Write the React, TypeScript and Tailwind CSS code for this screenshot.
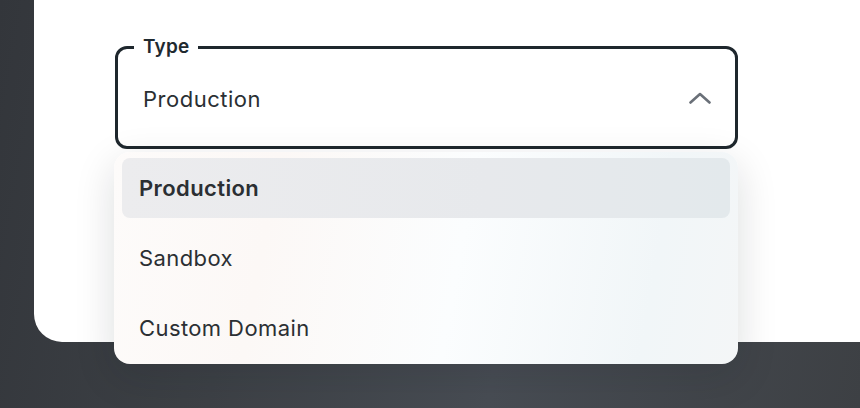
import React from "react";

export default function App() {
  return (
    <div className="w-[860px] h-[408px] overflow-hidden pl-[34px] bg-[linear-gradient(100deg,#33363b_0%,#3d4146_30%,#484d54_60%,#3d4044_100%)] font-['Inter','Noto_Sans',sans-serif]">
      <div className="relative h-[342px] bg-white rounded-bl-[28px] pt-[46px] pl-[81px] pr-[122px]">
        <div className="relative h-[103px] border-[3px] border-[#1e272d] rounded-[12px] bg-white flex items-center pl-[25px] pr-[24px] pt-[3px]">
          <span className="absolute -top-[13px] left-[16px] bg-white px-[9px] text-[19px] font-semibold leading-[22px] tracking-[0.2px] text-[#1f2a30]">
            Type
          </span>
          <span className="flex-1 text-[22px] leading-[28px] tracking-[0.5px] text-[#2a2f33]">Production</span>
          <svg width="22" height="12" viewBox="0 0 22 12" fill="none" className="mb-[3px]">
            <path d="M1.5 10.5 L11 2 L20.5 10.5" stroke="#6a7078" strokeWidth="2.6" strokeLinecap="round" strokeLinejoin="round" />
          </svg>
        </div>

        <div className="absolute left-[80px] top-[152px] w-[624px] h-[212px] rounded-[16px] bg-[linear-gradient(100deg,#fdfbfa_0%,#fcf8f6_25%,#fbfdfe_55%,#f1f6f8_85%,#f4f6f7_100%)] shadow-[0_12px_40px_rgba(15,20,30,0.14)] px-[8px] pt-[6px] flex flex-col gap-[10px]">
          <div className="h-[60px] rounded-[8px] bg-[linear-gradient(90deg,#ececee_0%,#e7e9ec_60%,#e3e9ec_100%)] flex items-center pl-[17px] text-[22px] tracking-[0.4px] font-semibold text-[#2b2f33]">
            Production
          </div>
          <div className="h-[60px] rounded-[8px] flex items-center pl-[17px] text-[22px] tracking-[0.4px] text-[#2b2f33]">
            Sandbox
          </div>
          <div className="h-[60px] rounded-[8px] flex items-center pl-[17px] text-[22px] tracking-[0.4px] text-[#2b2f33]">
            Custom Domain
          </div>
        </div>
      </div>
    </div>
  );
}
